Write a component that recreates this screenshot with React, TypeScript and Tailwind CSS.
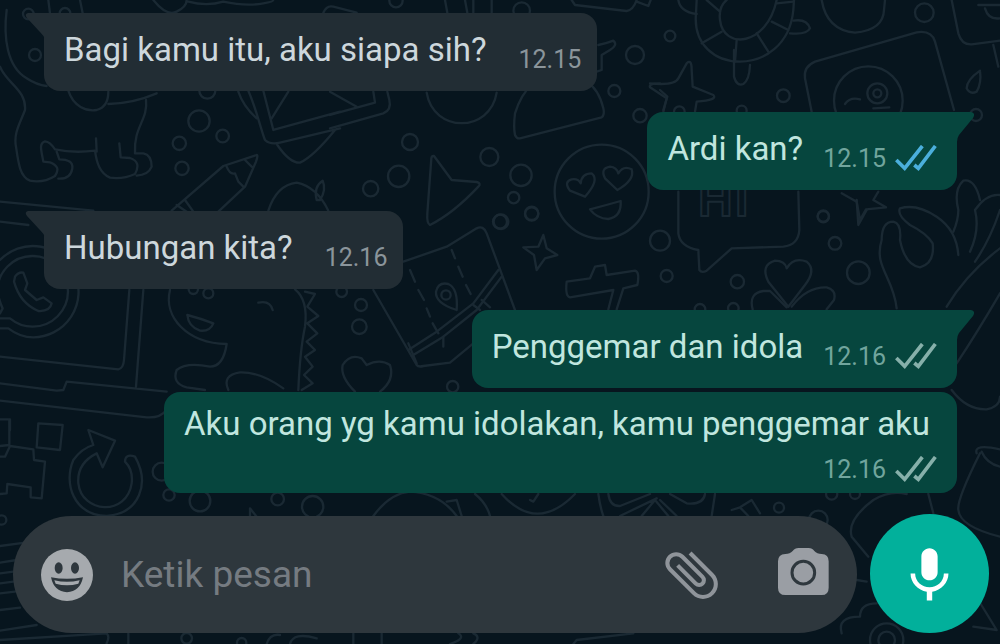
import React from "react";

type Circle = [number, number, number];

interface Patch {
  x: number;
  y: number;
  paths: string[];
  circles: Circle[];
}

// Wallpaper doodles, drawn at three units per pixel in patches of the canvas.
const patches: Patch[] = [
  {
    x: 0,
    y: 0,
    paths: [
      "M20 30C10 110 20 200 80 235Q110 255 140 258",
      "M0 200C20 250 80 270 75 330C60 370 40 400 48 440C55 490 60 530 90 542Q130 550 165 528Q185 500 150 487L130 485C125 455 115 430 135 424Q150 425 165 448Q220 460 285 452C290 490 300 520 330 533Q370 538 405 522Q425 485 390 474L362 472L358 430",
      "M170 455L178 478Q220 478 217 505Q212 538 175 536",
      "M288 415L290 455",
      "M438 300C445 360 400 380 405 460L430 460Q455 465 455 500Q445 525 410 527",
      "M205 272C220 320 260 335 290 330Q325 320 325 275",
      "M325 312Q400 310 470 280",
      "M145 0L150 40M240 0L248 40M460 0Q500 50 530 35Q560 20 560 0M565 5Q620 20 670 5Q740 20 790 10Q820 5 820 0",
      "M970 38Q980 15 1000 20L1070 38",
      "M745 272C770 330 780 380 795 420Q810 435 840 428L1020 385M790 272L820 390L1020 335M815 355L865 275M715 275Q730 320 770 355M832 435Q870 490 900 488Q940 470 1005 390",
      "M515 632L670 498L770 465Q775 465 768 485L735 560L655 635M680 500Q690 525 705 520L715 545L730 560M735 480L755 500M530 615L560 635M555 600L580 635",
      "M805 632Q830 555 890 548Q950 560 985 632M950 600Q940 560 968 542Q980 570 960 600Z",
      "M0 605L280 632",
    ],
    circles: [[105, 165, 18], [85, 42, 16], [195, 40, 16], [597, 363, 32], [668, 408, 19], [538, 430, 20], [546, 505, 20], [622, 272, 24]],
  },
  {
    x: 330,
    y: 0,
    paths: [
      "M290 278C310 400 480 400 500 278",
      "M570 415L815 352Q825 345 820 325C800 240 750 230 690 225C620 230 580 260 555 340Q550 380 555 405Q560 417 570 415",
      "M312 468L365 540L440 546Q455 550 445 560Q370 640 300 675Q290 670 292 640L304 475Q306 466 312 468",
      "M765 590L720 572Q700 545 725 538Q745 535 752 550Q755 520 785 520Q810 540 765 590",
      "M862 570L825 535Q810 505 840 500Q860 502 865 520Q880 495 905 508Q915 540 862 570",
      "M780 628Q830 615 872 603Q875 650 835 657Q800 655 780 628",
      "M0 345L135 308L130 275M0 385L160 340Q185 330 178 300L172 275M0 275L80 320",
      "M345 0L352 38M405 0L412 38M430 0V38M485 0V38M725 0L735 15L890 33Q910 30 920 0M920 5L955 18L962 0",
      "M805 135Q830 130 850 122Q865 135 840 150L815 165V210L800 215",
      "M990 250Q955 250 960 262L1010 295L1000 335",
    ],
    circles: [[198, 2, 20], [575, 32, 25], [915, 165, 27], [853, 273, 18], [930, 347, 20], [240, 426, 24], [206, 529, 32], [122, 566, 23], [478, 471, 27], [573, 526, 32], [551, 593, 17], [605, 640, 20], [513, 665, 22], [815, 575, 141]],
  },
  {
    x: 660,
    y: 0,
    paths: [
      "M108 40C90 230 380 240 400 30L402 0M180 60C190 150 320 140 350 0M180 60Q175 20 200 0M108 40L110 0",
      "M185 95L125 130M230 120L225 185M290 100L325 155M335 65L385 90M350 10L400 5M180 35L140 0",
      "M222 150V230Q230 260 250 252Q268 240 270 195",
      "M390 100Q440 105 450 85Q440 55 400 62M55 0Q60 35 110 42",
      "M485 0Q500 90 585 98Q670 90 672 30L675 0",
      "M455 335L435 235Q430 200 465 185L770 97Q815 90 825 125L882 330",
      "M555 312Q570 290 600 298M640 325L688 322",
      "M875 0L895 100Q905 135 935 133L1020 122M955 15H1020M975 25Q985 60 1020 55M1000 135L1015 200",
      "M960 212Q920 240 920 265Q930 285 950 275Q965 250 960 212",
      "M-30 250Q45 258 55 235L80 190Q95 175 95 210L98 260L160 285Q175 300 110 305L105 335M0 270L22 290L10 330",
      "M55 575V700Q60 740 115 750L118 810Q125 820 140 812L215 745L370 740Q415 735 418 690L415 575",
      "M545 580L590 605L600 660L618 628L678 622L640 600L655 575",
    ],
    circles: [[793, 38, 28], [30, 108, 16], [370, 287, 19], [948, 345, 18], [58, 335, 16], [245, 332, 15], [625, 302, 103], [652, 280, 30], [652, 280, 12], [490, 648, 17]],
  },
  {
    x: 0,
    y: 210,
    paths: [
      "M0 355L25 355Q60 382 100 382A137 137 0 1 0 0 150",
      "M0 325L30 325Q60 350 98 350A106 106 0 1 0 -8 245Q0 280 8 295L0 310",
      "M45 200Q55 185 70 188L82 220L75 240L110 270L130 262L155 280Q150 305 115 303Q60 280 42 215Z",
      "M0 440L355 478Q370 475 372 450L388 240M430 240L408 530M0 520L170 542L190 540L200 515L500 545M0 572L440 622Q480 625 500 600M0 35L85 45",
      "M510 240C490 320 560 400 680 402Q670 470 630 470Q560 455 530 480Q515 520 560 532L615 540",
      "M562 315Q600 325 640 340Q630 365 600 362Q565 350 562 315M775 278Q810 270 818 300",
      "M885 238Q925 270 915 350Q900 420 895 540M915 245L945 252L922 290L955 318L922 340L952 370L920 395L945 420L915 440L938 470L912 495L938 520L905 540",
      "M685 540Q665 495 720 487Q780 485 850 535",
      "M0 628H30V660",
    ],
    circles: [[580, 238, 14], [625, 250, 15]],
  },
  {
    x: 330,
    y: 210,
    paths: [
      "M220 155L350 110L440 55Q460 45 470 70L555 300M130 240L260 465Q265 472 280 468L360 458L430 400",
      "M235 420L320 365L430 280L505 180M245 438L340 380L440 300L515 200M235 400L260 460",
      "M240 180L255 215M265 240L282 270M290 295L300 320M308 340L325 370M365 120L375 145M385 170L398 200M408 225L422 252M340 380V410M430 285L450 300M455 270L480 292",
      "M380 300Q315 280 318 245Q325 215 355 222Q385 235 380 300",
      "M640 75L625 110L580 112L612 135L620 180L645 145L682 135L650 115Z",
      "M710 215L780 205L795 170L825 165L830 195L915 182Q930 185 922 225L880 235L860 298M835 298L850 240L720 262Q705 260 710 215",
      "M75 545Q30 500 38 465Q60 430 95 445L110 465Q150 445 180 465Q195 510 150 545",
    ],
    circles: [[510, 35, 21], [605, 12, 20], [990, 92, 30], [1010, 198, 18], [35, 245, 16], [93, 285, 18], [88, 350, 22], [368, 530, 17], [348, 255, 14]],
  },
  {
    x: 660,
    y: 210,
    paths: [
      "M385 290L325 215Q300 165 345 152Q375 152 380 175Q400 140 440 155Q470 180 435 225Z",
      "M278 298Q265 250 310 243L330 243L380 292M395 290Q440 230 500 232Q530 240 522 270L500 298",
      "M710 295C700 200 640 170 665 90Q665 35 700 35Q725 40 720 90Q735 165 780 172Q825 160 818 100Q800 70 750 45Q710 15 720 -5Q770 -20 830 20Q890 60 895 135",
      "M895 0Q895 30 880 65M945 0Q960 60 930 125M960 -30Q945 -95 910 -88Q880 -60 895 0M1020 0Q990 90 945 155M1020 -45Q980 -50 945 0",
      "M1020 115Q920 190 860 290M1020 250Q950 370 890 460M875 540Q920 600 980 598Q1020 590 1020 560",
      "M590 -30L595 45L620 0",
    ],
    circles: [[120, 298, 16], [220, 295, 16], [490, 20, 17], [525, 100, 19], [595, 188, 34], [232, 215, 20]],
  },
  {
    x: 0,
    y: 420,
    paths: [
      "M115 10L188 15L180 90L110 82ZM0 78L28 75V0M0 110H15L30 78L100 88L102 120L135 125L125 235L92 232V202L22 192L20 220L0 222",
      "M265 30L345 62L308 142L290 100Q230 130 235 190C245 280 380 290 395 190Q400 150 375 125Q375 100 405 110C450 190 420 280 320 288C220 285 190 190 220 120Q245 85 280 75Z",
      "M0 378L75 368M0 428L50 420M0 460L40 455M0 490L40 485M0 520L45 515M0 570L60 563M0 632L110 615M0 660L320 640Q330 650 320 670",
      "M750 290V265L770 290M385 640V672M800 672Q810 640 840 645M870 672Q880 635 950 655",
    ],
    circles: [[485, 155, 27], [507, 225, 17], [600, 243, 31], [833, 237, 19], [938, 260, 32], [5, 300, 14], [560, 655, 16], [725, 668, 14]],
  },
  {
    x: 330,
    y: 420,
    paths: [
      "M130 288Q180 220 240 215Q330 220 380 288M350 245L380 240L395 288M435 222Q470 250 480 288M515 222Q620 340 735 222M600 240L610 245L625 222",
      "M805 222Q810 260 820 288M835 222Q840 260 870 258L960 222M870 288L980 235M935 288L975 240L1015 288",
      "M70 640V672M155 640V672M385 640Q410 655 360 672M430 640Q455 650 430 672M730 672L740 660L910 640",
    ],
    circles: [],
  },
  {
    x: 660,
    y: 420,
    paths: [
      "M0 240L50 288M30 222L80 250Q130 255 135 222M165 222L155 288M215 270L240 262L275 240L300 280M240 262L265 288",
      "M575 350Q560 300 640 240Q690 210 740 222M575 350L625 410M590 480L620 485M805 222L820 280",
      "M960 100Q890 240 895 270Q900 320 1020 350M950 100Q940 70 1020 88M965 95Q980 130 1020 140",
      "M545 640Q530 590 600 590Q600 550 650 550M955 540L1010 630L940 620",
    ],
    circles: [[357, 263, 15], [475, 300, 28], [680, 660, 50], [680, 660, 25], [515, 222, 17], [585, 222, 15]],
  },
];

function Wallpaper() {
  return (
    <svg
      aria-hidden="true"
      className="absolute inset-0 h-full w-full"
      viewBox="0 0 1000 644"
      preserveAspectRatio="xMidYMid slice"
      fill="none"
      stroke="#1a2933"
      strokeWidth={7}
      strokeLinecap="round"
      strokeLinejoin="round"
    >
      {patches.map((patch, index) => (
        <g key={index} transform={`translate(${patch.x} ${patch.y}) scale(0.33333)`}>
          {patch.paths.map((d) => (
            <path key={d} d={d} />
          ))}
          {patch.circles.map(([cx, cy, r]) => (
            <circle key={`${cx}-${cy}-${r}`} cx={cx} cy={cy} r={r} />
          ))}
        </g>
      ))}
      <text x="698 735" y="216" fontFamily="Liberation Sans, sans-serif" fontWeight={700} fontSize={48} strokeWidth={2}>
        HI
      </text>
    </svg>
  );
}

function Ticks({ read }: { read: boolean }) {
  return (
    <svg
      role="img"
      aria-label={read ? "Dibaca" : "Terkirim"}
      viewBox="705 433 129 84"
      className={read ? "h-7 w-[43px] text-[#4bafdc]" : "h-7 w-[43px] text-[#86b0aa]"}
      fill="none"
      stroke="currentColor"
      strokeWidth={11}
    >
      <path d="M712 478L737 503L790 436M766 493L778 503L829 436" />
    </svg>
  );
}

function Tail({ side }: { side: "in" | "out" }) {
  return side === "in" ? (
    <svg aria-hidden="true" viewBox="0 0 21 26" className="absolute top-0 -left-5 h-[26px] w-[21px] text-[#222d34]">
      <path fill="currentColor" d="M21 0H4Q0 1 3 5L15 18Q20 23 21 26Z" />
    </svg>
  ) : (
    <svg aria-hidden="true" viewBox="0 0 18 30" className="absolute top-0 -right-[17px] h-[30px] w-[18px] text-[#06463e]">
      <path fill="currentColor" d="M0 0H15Q20 1 17 6L3 23Q1 26 1 30H0Z" />
    </svg>
  );
}

interface MessageProps {
  side: "in" | "out";
  text: string;
  time: string;
  read?: boolean;
}

function Message({ side, text, time, read = false }: MessageProps) {
  if (side === "in") {
    return (
      <li className="relative mt-[21px] flex items-end gap-8 self-start rounded-2xl rounded-tl-none bg-[#222d34] pt-[17px] pr-4 pb-[17px] pl-5 first:mt-0">
        <Tail side="in" />
        <p className="mb-1 text-[33px] leading-10 text-[#cdd7dc]">{text}</p>
        <time className="text-[25px] leading-7 text-[#8b959b]">{time}</time>
      </li>
    );
  }
  return (
    <li className="relative mt-[21px] flex items-end gap-5 self-end rounded-2xl rounded-tr-none bg-[#06463e] pt-[17px] pr-5 pb-[17px] pl-5">
      <Tail side="out" />
      <p className="mb-1 text-[33px] leading-10 text-[#c0e6df]">{text}</p>
      <div className="flex items-center gap-2">
        <time className="text-[25px] leading-7 text-[#71a59d]">{time}</time>
        <Ticks read={read} />
      </div>
    </li>
  );
}

function FollowUp({ text, time }: { text: string; time: string }) {
  return (
    <li className="mt-1 flex flex-col items-end gap-3 self-end rounded-2xl bg-[#06463e] pt-3 pr-5 pb-[9px] pl-5">
      <p className="pr-[7px] text-[33px] leading-10 text-[#c0e6df]">{text}</p>
      <div className="flex items-center gap-2">
        <time className="text-[25px] leading-7 text-[#71a59d]">{time}</time>
        <Ticks read={false} />
      </div>
    </li>
  );
}

function Composer() {
  return (
    <form className="relative mt-[21px] flex items-end gap-[13px] pr-[11px] pl-[13px]" onSubmit={(e) => e.preventDefault()}>
      <div className="flex h-[117px] min-w-0 flex-1 items-center rounded-full bg-[#2e373d] px-7">
        <button type="button" aria-label="Emoji" className="shrink-0 text-[#a6aaae]">
          <svg viewBox="123 386 156 156" className="size-[52px]">
            <circle cx="201" cy="464" r="78" fill="currentColor" />
            <ellipse cx="176" cy="443" rx="12" ry="17" fill="#2e373d" />
            <ellipse cx="225" cy="443" rx="12" ry="17" fill="#2e373d" />
            <path d="M153 471Q201 480 249 471Q240 514 201 516Q162 514 153 471Z" fill="#2e373d" />
            <path d="M163 480Q201 489 239 480L235 490Q201 500 167 490Z" fill="currentColor" />
          </svg>
        </button>
        <input
          type="text"
          aria-label="Ketik pesan"
          placeholder="Ketik pesan"
          className="ml-7 min-w-0 flex-1 bg-transparent text-[37px] leading-[44px] text-[#cdd7dc] outline-none placeholder:text-[#757b81]"
        />
        <button type="button" aria-label="Lampirkan" className="shrink-0 text-[#8f949a]">
          <svg viewBox="0 0 24 24" className="size-[65px]" fill="currentColor">
            <path
              transform="rotate(-45 12 12)"
              d="M16.5 6v11.5c0 2.21-1.79 4-4 4s-4-1.79-4-4V5a2.5 2.5 0 0 1 5 0v10.5c0 .55-.45 1-1 1s-1-.45-1-1V6H10v9.5a2.5 2.5 0 0 0 5 0V5c0-2.21-1.79-4-4-4S7 2.79 7 5v12.5c0 3.04 2.46 5.5 5.5 5.5s5.5-2.46 5.5-5.5V6h-1.5z"
            />
          </svg>
        </button>
        <button type="button" aria-label="Kamera" className="ml-[54px] shrink-0 text-[#9a9ea4]">
          <svg viewBox="354 378 153 171" className="h-[57px] w-[51px]">
            <path
              fill="currentColor"
              d="M376 402Q390 402 398 393Q404 384 416 384H446Q457 384 463 393Q471 402 485 402Q506 403 506 424V503Q506 525 485 525H376Q354 525 354 503V424Q354 403 376 402Z"
            />
            <circle cx="430" cy="458" r="34" fill="none" stroke="#2e373d" strokeWidth="9" />
          </svg>
        </button>
      </div>
      <button
        type="button"
        aria-label="Rekam pesan suara"
        className="flex size-[119px] shrink-0 items-center justify-center rounded-full bg-[#02b09b] text-white"
      >
        <svg viewBox="0 0 24 24" className="size-[65px]" fill="currentColor">
          <path d="M12 14.5c1.66 0 3-1.34 3-3V5.7c0-1.66-1.34-3-3-3S9 4.04 9 5.7v5.8c0 1.66 1.34 3 3 3zM17.3 12c0 3-2.54 5.1-5.3 5.1S6.7 15 6.7 12H5c0 3.41 2.72 6.23 6 6.72V22h2v-3.28c3.28-.48 6-3.3 6-6.72h-1.7z" />
        </svg>
      </button>
    </form>
  );
}

export default function App() {
  return (
    <main className="relative flex min-h-screen flex-col overflow-hidden bg-[#07151e] pt-[13px] pb-[11px] font-[Roboto,sans-serif]">
      <Wallpaper />
      <ul className="relative flex flex-1 flex-col pr-[43px] pl-11">
        <Message side="in" text="Bagi kamu itu, aku siapa sih?" time="12.15" />
        <Message side="out" text="Ardi kan?" time="12.15" read />
        <Message side="in" text="Hubungan kita?" time="12.16" />
        <Message side="out" text="Penggemar dan idola" time="12.16" />
        <FollowUp text="Aku orang yg kamu idolakan, kamu penggemar aku" time="12.16" />
      </ul>
      <Composer />
    </main>
  );
}
